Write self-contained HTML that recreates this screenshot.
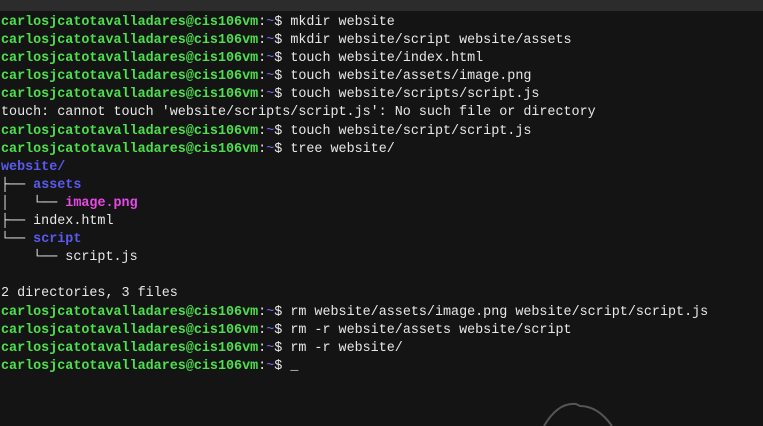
<!DOCTYPE html>
<html><head><style>
html,body{margin:0;padding:0;background:#141414;width:763px;height:426px;overflow:hidden;position:relative}
.bar{position:absolute;left:0;top:0;width:763px;height:11px;background:#2c2c2c}
pre{position:absolute;left:1px;top:14px;margin:0;font-family:"Liberation Mono","DejaVu Sans Mono",monospace;font-size:13.4px;line-height:18.1px;color:#e8e8e8}
.g{color:#4ce04c;font-weight:bold}
.b{color:#6a6af5}
.bb{color:#5a5af0;font-weight:bold}
.m{color:#e848e8;font-weight:bold}
svg{position:absolute;left:540px;top:400px}
</style></head><body>
<div class="bar"></div>
<pre><span class="g">carlosjcatotavalladares@cis106vm</span>:<span class="b">~</span>$ mkdir website
<span class="g">carlosjcatotavalladares@cis106vm</span>:<span class="b">~</span>$ mkdir website/script website/assets
<span class="g">carlosjcatotavalladares@cis106vm</span>:<span class="b">~</span>$ touch website/index.html
<span class="g">carlosjcatotavalladares@cis106vm</span>:<span class="b">~</span>$ touch website/assets/image.png
<span class="g">carlosjcatotavalladares@cis106vm</span>:<span class="b">~</span>$ touch website/scripts/script.js
touch: cannot touch 'website/scripts/script.js': No such file or directory
<span class="g">carlosjcatotavalladares@cis106vm</span>:<span class="b">~</span>$ touch website/script/script.js
<span class="g">carlosjcatotavalladares@cis106vm</span>:<span class="b">~</span>$ tree website/
<span class="bb">website/</span>
├── <span class="bb">assets</span>
│   └── <span class="m">image.png</span>
├── index.html
└── <span class="bb">script</span>
    └── script.js

2 directories, 3 files
<span class="g">carlosjcatotavalladares@cis106vm</span>:<span class="b">~</span>$ rm website/assets/image.png website/script/script.js
<span class="g">carlosjcatotavalladares@cis106vm</span>:<span class="b">~</span>$ rm -r website/assets website/script
<span class="g">carlosjcatotavalladares@cis106vm</span>:<span class="b">~</span>$ rm -r website/
<span class="g">carlosjcatotavalladares@cis106vm</span>:<span class="b">~</span>$ _</pre>
<svg width="80" height="26" viewBox="0 0 80 26"><path d="M4 26 Q18 2 36 4 L40 6 Q58 6 72 26" fill="none" stroke="#555" stroke-width="2"/></svg>
</body></html>
